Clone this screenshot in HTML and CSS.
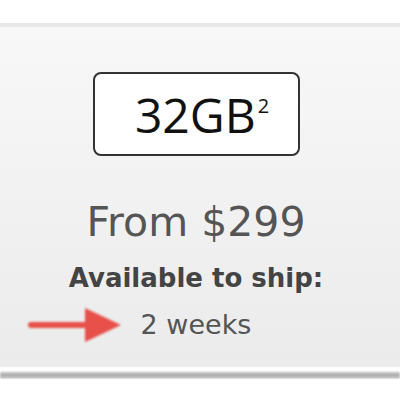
FILE: index.html
```html
<!DOCTYPE html>
<html lang="en">
  <head>
    <meta charset="UTF-8" />
    <title>iPad 32GB</title>
    <link rel="stylesheet" href="styles.css">
  </head>
  <body>
    <div class="top-strip"></div>

    <!-- Capacity card -->
    <div class="card">
      <div class="capacity">32GB<sup>2</sup></div>
      <div class="price">From $299</div>
      <div class="ship-label">Available to ship:</div>
      <div class="ship-time">
        <svg class="arrow" width="100" height="44" viewBox="0 0 100 44">
          <line x1="4" y1="22" x2="64" y2="22" stroke="#e8504a" stroke-width="6" stroke-linecap="round" />
          <polygon points="58,5 94,22 58,39" fill="#e8504a" />
        </svg>
        <span>2 weeks</span>
      </div>
    </div>

    <div class="bottom-rule"></div>
  </body>
</html>
```

FILE: styles.css
```css
body {
  margin: 0;
  padding: 0;
  background-color: #fff;
  font-family: "DejaVu Sans", sans-serif;
  overflow: hidden;
}

.top-strip {
  height: 23px;
  background-color: #fff;
}

.card {
  display: flex;
  flex-direction: column;
  align-items: center;
  height: 344px;
  padding-right: 8px;
  border-top: 4px solid #e8e8e8;
  background: linear-gradient(#f8f8f8, #ebebeb);
  box-sizing: border-box;
}

.capacity {
  margin-top: 45px;
  width: 191px;
  height: 80px;
  padding-left: 12px;
  border: 2px solid #333;
  border-radius: 8px;
  background-color: #fff;
  display: flex;
  justify-content: center;
  align-items: center;
  font-family: "Open Sans", sans-serif;
  font-size: 48px;
  color: #111;
}

.capacity sup {
  font-size: 20px;
  align-self: flex-start;
  margin-top: 18px;
  margin-left: 2px;
}

.price {
  margin-top: 42px;
  font-size: 41px;
  color: #555;
}

.ship-label {
  margin-top: 17px;
  font-size: 26px;
  font-weight: bold;
  color: #444;
}

.ship-time {
  position: relative;
  margin-top: 16px;
  font-size: 27px;
  color: #555;
}

.arrow {
  position: absolute;
  left: -114px;
  top: -6px;
  filter: blur(1px);
}

.bottom-rule {
  margin-top: 5px;
  height: 7px;
  background: linear-gradient(#c8c8c8, #a8a8a8 50%, #d8d8d8);
  filter: blur(1px);
}
```
